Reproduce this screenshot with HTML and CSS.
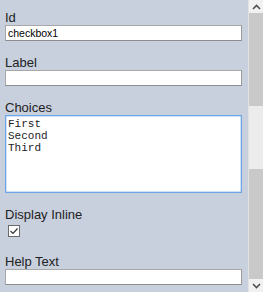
FILE: index.html
```html
<!DOCTYPE html>
<html>
<head>
<meta charset="utf-8">
<link rel="stylesheet" href="styles.css">
</head>
<body>
<div class="page">
  <div class="form">
    <div class="field">
      <label class="lbl">Id</label>
      <div class="input">checkbox1</div>
    </div>
    <div class="field">
      <label class="lbl">Label</label>
      <div class="input"></div>
    </div>
    <div class="field">
      <label class="lbl">Choices</label>
      <div class="textarea">First<br>Second<br>Third</div>
    </div>
    <div class="field">
      <label class="lbl">Display Inline</label>
      <div class="checkrow">
        <span class="check"><svg width="10" height="10" viewBox="0 0 10 10"><polyline points="1.5,5 4,7.5 8.5,2.5" fill="none" stroke="#333" stroke-width="1.2"/></svg></span>
      </div>
    </div>
    <div class="field">
      <label class="lbl">Help Text</label>
      <div class="input"></div>
    </div>
    <div class="below"></div>
  </div>
  <div class="scrollbar">
    <div class="sb-btn"><svg width="9" height="6" viewBox="0 0 9 6"><polyline points="1,5 4.5,1.5 8,5" fill="none" stroke="#505050" stroke-width="1.6"/></svg></div>
    <div class="sb-gray sb-top"></div>
    <div class="sb-light"></div>
    <div class="sb-gray sb-rest"></div>
    <div class="sb-btn"><svg width="9" height="6" viewBox="0 0 9 6"><polyline points="1,1 4.5,4.5 8,1" fill="none" stroke="#505050" stroke-width="1.6"/></svg></div>
  </div>
</div>
</body>
</html>
```
FILE: styles.css
```css
html, body {
  margin: 0;
  padding: 0;
  background: #c8cfdd;
  overflow: hidden;
}
.page {
  display: flex;
  width: 263px;
  height: 292px;
  overflow: hidden;
}
.form {
  width: 248px;
  padding: 10px 0 0 5px;
  box-sizing: border-box;
  font-family: "Liberation Sans", Arial, sans-serif;
  color: #222;
}
.field {
  margin-bottom: 14px;
}
.field:last-of-type {
  margin-bottom: 5px;
}
.lbl {
  display: block;
  font-size: 13px;
  line-height: 15px;
  height: 15px;
}
.input {
  width: 237px;
  height: 16px;
  box-sizing: border-box;
  background: #fff;
  border: 1px solid #a8a8a8;
  border-bottom-color: #8f8f8f;
  border-right-color: #9a9a9a;
  font-size: 10.5px;
  line-height: 14px;
  padding: 0 2px;
  color: #000;
}
.textarea {
  width: 237px;
  height: 78px;
  box-sizing: border-box;
  background: #fff;
  border: 1px solid #6fa6e6;
  box-shadow: inset 0 0 0 0.5px #9cc3ef;
  font-family: "Liberation Mono", "Courier New", monospace;
  font-size: 11px;
  line-height: 12px;
  padding: 2px 2px;
  color: #222;
}
.checkrow {
  height: 18px;
  padding-top: 3px;
  box-sizing: border-box;
}
.check {
  display: flex;
  align-items: center;
  justify-content: center;
  width: 12px;
  height: 12px;
  box-sizing: border-box;
  margin-left: 3px;
  background: #fff;
  border: 1px solid #6a6a6a;
}
.below {
  width: 38px;
  border-top: 1px solid #2c3547;
  margin-left: -5px;
}
.scrollbar {
  width: 15px;
  height: 292px;
  display: flex;
  flex-direction: column;
  background: #c9c9c9;
  border-left: 1px solid #e2e2e2;
  box-sizing: border-box;
}
.sb-btn {
  height: 13px;
  background: #f1f1f1;
  display: flex;
  align-items: center;
  justify-content: center;
  flex: none;
}
.sb-gray {
  background: #c9c9c9;
}
.sb-top {
  height: 93px;
  flex: none;
}
.sb-light {
  height: 63px;
  background: #ececec;
  flex: none;
}
.sb-rest {
  flex: 1;
}
```
